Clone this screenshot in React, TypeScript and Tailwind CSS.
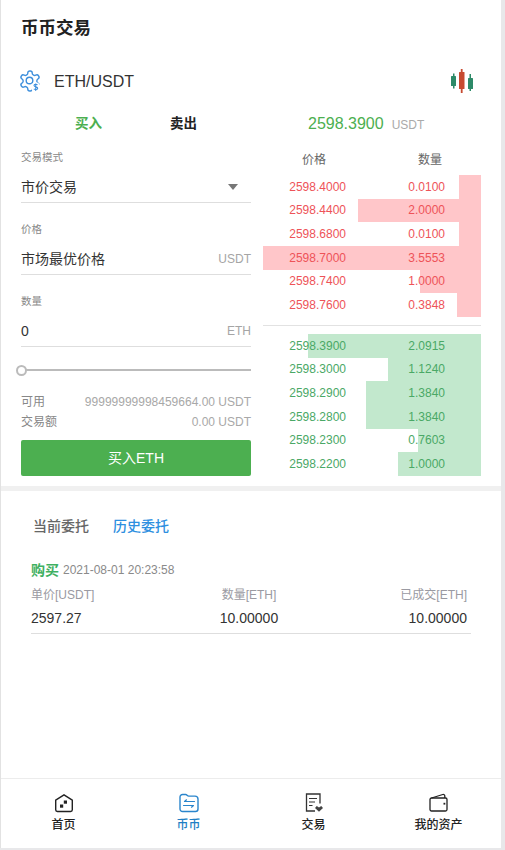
const font = { fontFamily: '"Liberation Sans", "Noto Sans CJK SC", sans-serif' };

const asks = [
  ["2598.4000", "0.0100", 22],
  ["2598.4400", "2.0000", 123],
  ["2598.6800", "0.0100", 22],
  ["2598.7000", "3.5553", 218],
  ["2598.7400", "1.0000", 61],
  ["2598.7600", "0.3848", 24],
] as const;
const bids = [
  ["2598.3900", "2.0915", 173],
  ["2598.3000", "1.1240", 93],
  ["2598.2900", "1.3840", 115],
  ["2598.2800", "1.3840", 115],
  ["2598.2300", "0.7603", 63],
  ["2598.2200", "1.0000", 83],
] as const;

function Row({ p, q, w, ask }: { p: string; q: string; w: number; ask: boolean }) {
  return (
    <div className={`relative flex h-[23.67px] items-center text-xs ${ask ? "text-[#ee5358]" : "text-[#4aa866]"}`}>
      <div className={`absolute right-0 top-0 h-full ${ask ? "bg-[#ffc6c9]" : "bg-[#c2e8cd]"}`} style={{ width: w }} />
      <span className="relative w-[83px] text-right">{p}</span>
      <span className="relative w-[99px] text-right">{q}</span>
    </div>
  );
}

function Field({ label, value, unit, arrow }: { label: string; value: string; unit?: string; arrow?: boolean }) {
  return (
    <div>
      <div className="h-[16px] text-[10.5px] leading-[16px] text-[#888]">{label}</div>
      <div className="flex h-[38px] items-center justify-between border-b border-[#dedede] pt-[6px] text-sm text-[#333]">
        <span>{value}</span>
        {unit && <span className="text-xs text-[#a5a5a5]">{unit}</span>}
        {arrow && <span className="mr-[13px] h-0 w-0 border-x-[5.5px] border-t-[6px] border-x-transparent border-t-[#777]" />}
      </div>
    </div>
  );
}

function Gear() {
  return (
    <svg width="24" height="24" viewBox="0 0 24 24" fill="none" stroke="#3d8fdc" strokeWidth="1.400" strokeLinejoin="round">
      <path d="M12.22 2h-.44a2 2 0 0 0-2 2v.18a2 2 0 0 1-1 1.730l-.43.250a2 2 0 0 1-2 0l-.15-.080a2 2 0 0 0-2.730.730l-.22.380a2 2 0 0 0 .730 2.730l.15.100a2 2 0 0 1 1 1.720v.510a2 2 0 0 1-1 1.740l-.15.090a2 2 0 0 0-.730 2.730l.22.380a2 2 0 0 0 2.730.730l.15-.080a2 2 0 0 1 2 0l.43.250a2 2 0 0 1 1 1.730V20a2 2 0 0 0 2 2h.44a2 2 0 0 0 2-2v-.18a2 2 0 0 1 1-1.730l.43-.250a2 2 0 0 1 2 0l.15.080a2 2 0 0 0 2.730-.730l.22-.390a2 2 0 0 0-.730-2.730l-.15-.080a2 2 0 0 1-1-1.740v-.500a2 2 0 0 1 1-1.740l.15-.090a2 2 0 0 0 .730-2.730l-.22-.380a2 2 0 0 0-2.730-.730l-.15.080a2 2 0 0 1-2 0l-.43-.250a2 2 0 0 1-1-1.730V4a2 2 0 0 0-2-2z" />
      <circle cx="11.500" cy="11.500" r="3.300" />
      <path d="m14 14 1.500 1.500" />
      <circle cx="17.500" cy="18" r="4.800" fill="#fff" stroke="none" />
      <path d="M19.500 15.800c-1-.9-3.500-.7-3.500.7 0 1.700 3.700 1 3.700 2.800 0 1.400-2.500 1.700-3.900.6M17.700 14.500v7.500" strokeWidth="1.100" />
    </svg>
  );
}

function Candles() {
  return (
    <svg width="24" height="24" viewBox="0 0 24 24">
      <rect x="3" y="4.500" width="1.500" height="15" fill="#2d8a68" />
      <rect x="1" y="7" width="5" height="10" rx="0.500" fill="#2d8a68" />
      <rect x="10.800" y="0" width="1.800" height="24" fill="#c74a30" />
      <rect x="9" y="3" width="5.500" height="17" rx="0.500" fill="#c74a30" />
      <rect x="19.500" y="5" width="1.500" height="17" fill="#2d8a68" />
      <rect x="18" y="9" width="5" height="11" rx="0.500" fill="#2d8a68" />
    </svg>
  );
}

const navIcons = [
  <svg key="h" width="20" height="20" viewBox="0 0 20 20" fill="none" stroke="#222" strokeWidth="1.400" strokeLinejoin="round">
    <path d="M1.700 7.200 10 1.800l8.300 5.400v9.600a1.700 1.700 0 0 1-1.700 1.700H3.400a1.700 1.700 0 0 1-1.700-1.700z" />
    <rect x="9.800" y="7.500" width="3.200" height="3.200" fill="#222" stroke="none" />
    <rect x="6" y="11.500" width="3.200" height="3.200" fill="#222" stroke="none" />
  </svg>,
  <svg key="b" width="20" height="20" viewBox="0 0 20 20" fill="none" stroke="#2a85cc" strokeWidth="1.400" strokeLinejoin="round" strokeLinecap="round">
    <path d="M1 4a2.500 2.500 0 0 1 2.500-2.500h3.200c1.200 0 1.600 1.600 3 1.600h6.300A3 3 0 0 1 19 6v10a2.500 2.500 0 0 1-2.500 2.500h-13A2.500 2.500 0 0 1 1 16z" />
    <path d="M15.500 8.500H5.500l2-1.700M4.500 12.500h10l-2 1.700" strokeWidth="1.200" />
  </svg>,
  <svg key="t" width="20" height="20" viewBox="0 0 20 20" fill="none" stroke="#333" strokeWidth="1.300">
    <path d="M11 18H2.500V1h13.500v9.500" />
    <path d="M5 5.500h8M5 9h6M5 12.500h3.500" strokeWidth="1.200" />
    <path d="m15 18.800-4-3.800 1.800-2 2.200 1.500 2.200-1.500 1.800 2z" fill="#444" stroke="none" />
  </svg>,
  <svg key="w" width="20" height="20" viewBox="0 0 20 20" fill="none" stroke="#222" strokeWidth="1.300" strokeLinejoin="round">
    <path d="M1 6.500A1.500 1.500 0 0 1 2.500 5h14A1.500 1.500 0 0 1 18 6.500v10a1.500 1.500 0 0 1-1.500 1.500h-14A1.500 1.500 0 0 1 1 16.500z" />
    <path d="M2.500 5 13.800 1.500c1-.3 2 .5 2 1.400V5" />
    <rect x="14.500" y="9.800" width="1.800" height="1.800" fill="#222" stroke="none" />
  </svg>,
];

export default function App() {
  return (
    <div style={font} className="flex h-[850px] w-[505px] flex-col overflow-hidden bg-[#e8e8ea] pb-[2px] pr-[4px]">
      <div className="flex min-h-0 flex-1 flex-col border-l border-[#e2e2e2] bg-white">
        <h1 className="flex h-[56px] items-center pl-[20px] text-[17.500px] font-bold text-[#222]">币币交易</h1>
        <div className="flex h-[50px] items-center justify-between pl-[17px] pr-[27px]">
          <div className="flex items-center gap-[12px]">
            <Gear />
            <span className="relative top-[1px] text-base text-[#333]">ETH/USDT</span>
          </div>
          <Candles />
        </div>
        <div className="flex h-[36px] items-center">
          <div className="flex w-[262px] items-center pl-[74px] text-[13.500px] font-bold">
            <span className="text-[#4caf50]">买入</span>
            <span className="ml-[68px] text-[#222]">卖出</span>
          </div>
          <div className="flex items-baseline pl-[45px]">
            <span className="text-base text-[#4caf50]">2598.3900</span>
            <span className="ml-[8px] text-xs text-[#aaa]">USDT</span>
          </div>
        </div>
        <div className="flex h-[349px] border-b-[5px] border-[#f0f0f0]">
          <div className="ml-[20px] w-[230px] pt-[7px]">
            <Field label="交易模式" value="市价交易" arrow />
            <div className="mt-[18px]"><Field label="价格" value="市场最优价格" unit="USDT" /></div>
            <div className="mt-[18px]"><Field label="数量" value="0" unit="ETH" /></div>
            <div className="relative mt-[17px] flex h-[12px] items-center">
              <div className="h-[2px] w-full bg-[#bbb]" />
              <div className="absolute left-[-5px] h-[11px] w-[11px] rounded-full border-2 border-[#bbb] bg-white" />
            </div>
            <div className="mt-[16px] flex h-[20px] items-center justify-between text-xs text-[#888]">
              <span>可用</span><span className="text-[#a8a8a8]">99999999998459664.00 USDT</span>
            </div>
            <div className="flex h-[20px] items-center justify-between text-xs text-[#888]">
              <span>交易额</span><span className="text-[#a8a8a8]">0.00 USDT</span>
            </div>
            <button className="mt-[8px] h-[36px] w-full rounded-[2px] bg-[#4caf50] text-sm text-white">买入ETH</button>
          </div>
          <div className="ml-[12px] w-[218px]">
            <div className="flex h-[33px] items-center pt-[3px] text-xs text-[#666]">
              <span className="w-[63px] text-right">价格</span>
              <span className="ml-[92px]">数量</span>
            </div>
            {asks.map((r) => <Row key={r[0]} p={r[0]} q={r[1]} w={r[2]} ask />)}
            <div className="my-[8px] border-b border-[#e2e2e2]" />
            {bids.map((r) => <Row key={r[0]} p={r[0]} q={r[1]} w={r[2]} ask={false} />)}
          </div>
        </div>
        <div className="min-h-0 flex-1 px-[30px]">
          <div className="mt-[26px] flex gap-[24px] pl-[2px] text-[14px] leading-[18px]">
            <span className="font-medium text-[#666]">当前委托</span>
            <span className="font-medium text-[#2d8fe0]">历史委托</span>
          </div>
          <div className="mt-[25px] flex items-center gap-[4px] leading-[20px]">
            <span className="text-sm font-bold text-[#3fb061]">购买</span>
            <span className="text-xs text-[#8a8a8a]">2021-08-01 20:23:58</span>
          </div>
          <div className="mt-[5px] grid w-[436px] grid-cols-3 text-xs leading-[20px] text-[#9a9aa2]">
            <span>单价[USDT]</span><span className="text-center">数量[ETH]</span><span className="text-right">已成交[ETH]</span>
          </div>
          <div className="w-[440px] border-b border-[#dedede] pb-[5px]">
            <div className="mt-[3px] grid w-[436px] grid-cols-3 text-sm leading-[20px] text-[#333]">
              <span>2597.27</span><span className="text-center">10.00000</span><span className="text-right">10.00000</span>
            </div>
          </div>
        </div>
        <nav className="grid h-[70px] grid-cols-4 border-t border-[#ececec] pt-[14px]">
          {["首页", "币币", "交易", "我的资产"].map((t, i) => (
            <div key={t} className="flex flex-col items-center gap-[2px]">
              {navIcons[i]}
              <span className={`text-xs font-medium leading-[20px] ${i === 1 ? "text-[#1f7fc4]" : "text-[#222]"}`}>{t}</span>
            </div>
          ))}
        </nav>
      </div>
    </div>
  );
}
